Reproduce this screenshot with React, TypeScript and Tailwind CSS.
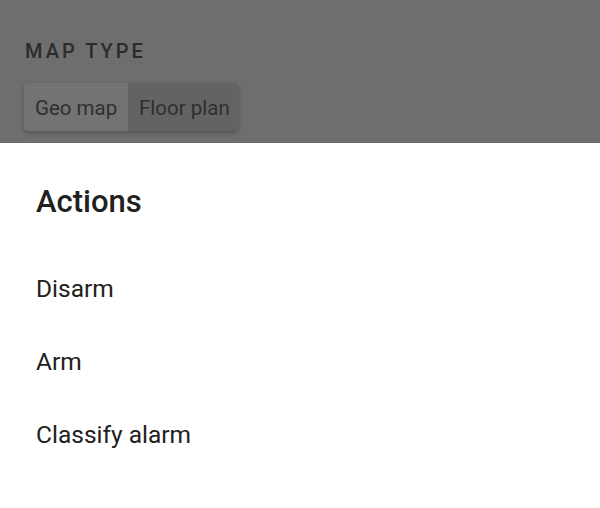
import React from 'react';

const actions = ['Disarm', 'Arm', 'Classify alarm'];

export default function App() {
  return (
    <div className="w-[600px] h-[508px] flex flex-col overflow-hidden font-['Roboto',_'Liberation_Sans',_sans-serif]">
      {/* dimmed page behind the sheet */}
      <div className="h-[143px] shrink-0 bg-[#6e6e6e] px-[24px] pt-[39px]">
        <div className="pl-[1px] text-[20px] leading-[24px] font-medium tracking-[0.15em] text-[#2b2b2b]">
          MAP TYPE
        </div>
        <div className="mt-[20px] inline-flex h-[48px] rounded-[4px] overflow-hidden shadow-[0_2px_4px_rgba(0,0,0,0.25)]">
          <div className="flex items-center pl-[11px] pt-[2px] w-[104px] whitespace-nowrap bg-[#737373] text-[20.5px] text-[#2f2f2f]">
            Geo map
          </div>
          <div className="flex items-center pl-[11px] pt-[2px] w-[110px] whitespace-nowrap bg-[#636363] text-[20.5px] text-[#2f2f2f]">
            Floor plan
          </div>
        </div>
      </div>

      {/* bottom sheet */}
      <div className="flex-1 bg-white px-[36px] pt-[41px]">
        <div className="text-[31px] leading-[36px] font-medium text-[#212121]">Actions</div>
        <div className="mt-[33px] flex flex-col">
          {actions.map((a) => (
            <div key={a} className="h-[73px] flex items-center text-[24.5px] text-[#212121]">
              {a}
            </div>
          ))}
        </div>
      </div>
    </div>
  );
}
